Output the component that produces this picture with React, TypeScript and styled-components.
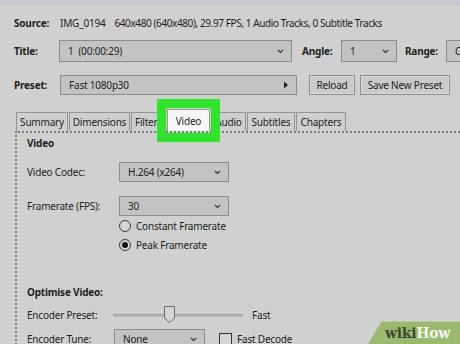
import * as React from 'react';
import styled, { createGlobalStyle, css } from 'styled-components';

const Global = createGlobalStyle`
  html, body { margin: 0; padding: 0; background: #d0d0d0; }
  * { box-sizing: border-box; }
`;

const Screen = styled.div`
  position: relative;
  width: 460px;
  height: 344px;
  overflow: hidden;
  background: #d0d0d0;
  font-family: 'Noto Sans', 'Open Sans', sans-serif;
  font-size: 10px;
  letter-spacing: -0.2px;
  color: #1e1e1e;
`;

const TopStrip = styled.div`
  height: 5px;
  background: #c6c9d1;
  border-bottom: 1px solid #c2c2c2;
`;

const Row = styled.div<{ top: number; h?: number }>`
  display: flex;
  align-items: center;
  margin-top: ${({ top }) => top}px;
  height: ${({ h }) => h ?? 20}px;
  padding-left: 14px;
  white-space: nowrap;
`;

const Label = styled.span<{ w?: number; ml?: number }>`
  font-weight: 700;
  width: ${({ w }) => w ?? 46}px;
  margin-left: ${({ ml }) => ml ?? 0}px;
  flex: none;
`;

const Text = styled.span<{ ml?: number; tight?: boolean }>`
  margin-left: ${({ ml }) => ml ?? 0}px;
  ${({ tight }) =>
    tight &&
    css`
      letter-spacing: -0.4px;
    `}
`;

const Select = styled.div<{ w: number; ml?: number; h?: number }>`
  display: flex;
  align-items: center;
  justify-content: space-between;
  flex: none;
  width: ${({ w }) => w}px;
  height: ${({ h }) => h ?? 20}px;
  margin-left: ${({ ml }) => ml ?? 0}px;
  padding: 0 7px 0 8px;
  background: #c3c3c3;
  border: 1px solid #8c8c8c;
`;

const Chevron = () => (
  <svg width="7" height="5" viewBox="0 0 7 5">
    <path d="M1 1 L3.5 3.5 L6 1" fill="none" stroke="#333" strokeWidth="1.1" />
  </svg>
);

const Button = styled.div<{ w: number; ml?: number }>`
  display: flex;
  align-items: center;
  justify-content: center;
  flex: none;
  width: ${({ w }) => w}px;
  height: 20px;
  margin-left: ${({ ml }) => ml ?? 0}px;
  background: #cbcbcb;
  border: 1px solid #8e8e8e;
  box-shadow: inset 0 0 0 1px #dadada;
`;

const TabBar = styled.div`
  display: flex;
  align-items: flex-end;
  margin-top: 13px;
  padding-left: 16px;
  height: 23px;
`;

const Tab = styled.div<{ active?: boolean; w: number }>`
  position: relative;
  display: flex;
  align-items: center;
  justify-content: center;
  width: ${({ w }) => w}px;
  height: 19px;
  margin-right: 1px;
  background: #cfcfcf;
  border: 1px solid #949494;
  border-bottom: none;
  white-space: nowrap;
  ${({ active }) =>
    active &&
    css`
      height: 22px;
      background: #f7f7f7;
      z-index: 2;
    `}
`;

const Highlight = styled.div`
  position: absolute;
  left: -11px;
  right: -11px;
  top: -11px;
  bottom: -11px;
  border: 9px solid #2fe52b;
  pointer-events: none;
`;

const Panel = styled.div`
  margin-left: 15px;
  width: 480px;
  height: 230px;
  border-top: 2px dotted #7d7d7d;
  border-left: 2px dotted #7d7d7d;
  padding: 2px 0 0 10px;
`;

const Heading = styled.div<{ top?: number }>`
  font-weight: 700;
  margin-top: ${({ top }) => top ?? 0}px;
  height: 16px;
  display: flex;
  align-items: center;
`;

const Field = styled.div<{ top: number }>`
  display: flex;
  align-items: center;
  margin-top: ${({ top }) => top}px;
  height: 20px;
  white-space: nowrap;
`;

const FieldLabel = styled.span`
  width: 92px;
  flex: none;
`;

const Option = styled.div<{ top: number }>`
  display: flex;
  align-items: center;
  margin-top: ${({ top }) => top}px;
  margin-left: 92px;
  height: 14px;
  gap: 5px;
`;

const Radio = styled.span<{ checked?: boolean }>`
  width: 12px;
  height: 12px;
  border-radius: 50%;
  border: 1px solid #3a3a3a;
  background: #d6d6d6;
  display: flex;
  align-items: center;
  justify-content: center;
  &::after {
    content: '';
    width: 6px;
    height: 6px;
    border-radius: 50%;
    background: ${({ checked }) => (checked ? '#111' : 'transparent')};
  }
`;

const Slider = styled.div`
  position: relative;
  width: 130px;
  height: 20px;
  margin-left: -6px;
  display: flex;
  align-items: center;
`;

const Track = styled.div`
  width: 100%;
  height: 3px;
  background: #b4b4b4;
  border-top: 1px solid #a0a0a0;
`;

const Thumb = styled.svg`
  position: absolute;
  left: 51px;
  top: 1px;
`;

const Checkbox = styled.span<{ ml?: number }>`
  width: 13px;
  height: 13px;
  margin-left: ${({ ml }) => ml ?? 0}px;
  border: 1px solid #333;
  background: #d6d6d6;
  flex: none;
`;

const Logo = styled.svg`
  position: absolute;
  right: 0;
  bottom: 0;
`;

export default function App() {
  return (
    <Screen>
      <Global />
      <TopStrip />
      <Row top={11} h={14}>
        <Label>Source:</Label>
        <Text>IMG_0194</Text>
        <Text ml={9} tight>640x480 (640x480), 29.97 FPS, 1 Audio Tracks, 0 Subtitle Tracks</Text>
      </Row>
      <Row top={10} h={22}>
        <Label w={45}>Title:</Label>
        <Select w={233} h={22}>
          <span>1&nbsp; (00:00:29)</span>
          <Chevron />
        </Select>
        <Label w={39} ml={10}>Angle:</Label>
        <Select w={56} h={22}>
          <span>1</span>
          <Chevron />
        </Select>
        <Label w={41} ml={8}>Range:</Label>
        <Select w={40} h={22}>
          <span>Ch</span>
        </Select>
      </Row>
      <Row top={13} h={20}>
        <Label>Preset:</Label>
        <Select w={237}>
          <span>Fast 1080p30</span>
          <svg width="6" height="8" viewBox="0 0 6 8">
            <path d="M1 0.5 L5 4 L1 7.5 Z" fill="#222" />
          </svg>
        </Select>
        <Button w={46} ml={12}>Reload</Button>
        <Button w={90} ml={5}>Save New Preset</Button>
      </Row>
      <TabBar>
        <Tab w={52}>Summary</Tab>
        <Tab w={61}>Dimensions</Tab>
        <Tab w={35}>Filters</Tab>
        <Tab w={43} active>
          Video
          <Highlight />
        </Tab>
        <Tab w={35}>Audio</Tab>
        <Tab w={48}>Subtitles</Tab>
        <Tab w={50}>Chapters</Tab>
      </TabBar>
      <Panel>
        <Heading>Video</Heading>
        <Field top={11}>
          <FieldLabel>Video Codec:</FieldLabel>
          <Select w={110}>
            <span>H.264 (x264)</span>
            <Chevron />
          </Select>
        </Field>
        <Field top={14}>
          <FieldLabel>Framerate (FPS):</FieldLabel>
          <Select w={110}>
            <span>30</span>
            <Chevron />
          </Select>
        </Field>
        <Option top={3}>
          <Radio />
          <span>Constant Framerate</span>
        </Option>
        <Option top={5}>
          <Radio checked />
          <span>Peak Framerate</span>
        </Option>
        <Heading top={32}>Optimise Video:</Heading>
        <Field top={5}>
          <FieldLabel>Encoder Preset:</FieldLabel>
          <Slider>
            <Track />
            <Thumb width="11" height="17" viewBox="0 0 11 17">
              <path d="M0.5 0.5 H10.5 V12 L5.5 16.5 L0.5 12 Z" fill="#d4d4d4" stroke="#6a6a6a" />
            </Thumb>
          </Slider>
          <Text ml={9}>Fast</Text>
        </Field>
        <Field top={4}>
          <FieldLabel>Encoder Tune:</FieldLabel>
          <Select w={91} ml={-5}>
            <span>None</span>
            <Chevron />
          </Select>
          <Checkbox ml={14} />
          <Text ml={5}>Fast Decode</Text>
        </Field>
      </Panel>
      <Logo width="92" height="23" viewBox="0 0 92 23">
        <path d="M14 0 H92 V23 H0 Z" fill="#9ab86f" />
        <path d="M14 0 H92 V1 H13 Z" fill="#b7cf94" />
        <text x="17" y="17" fontFamily="'DejaVu Serif', serif" fontWeight="700" fontSize="14" letterSpacing="-0.3" fill="#3a4a2a">
          wiki<tspan fill="#f4f6ee">How</tspan>
        </text>
      </Logo>
    </Screen>
  );
}
